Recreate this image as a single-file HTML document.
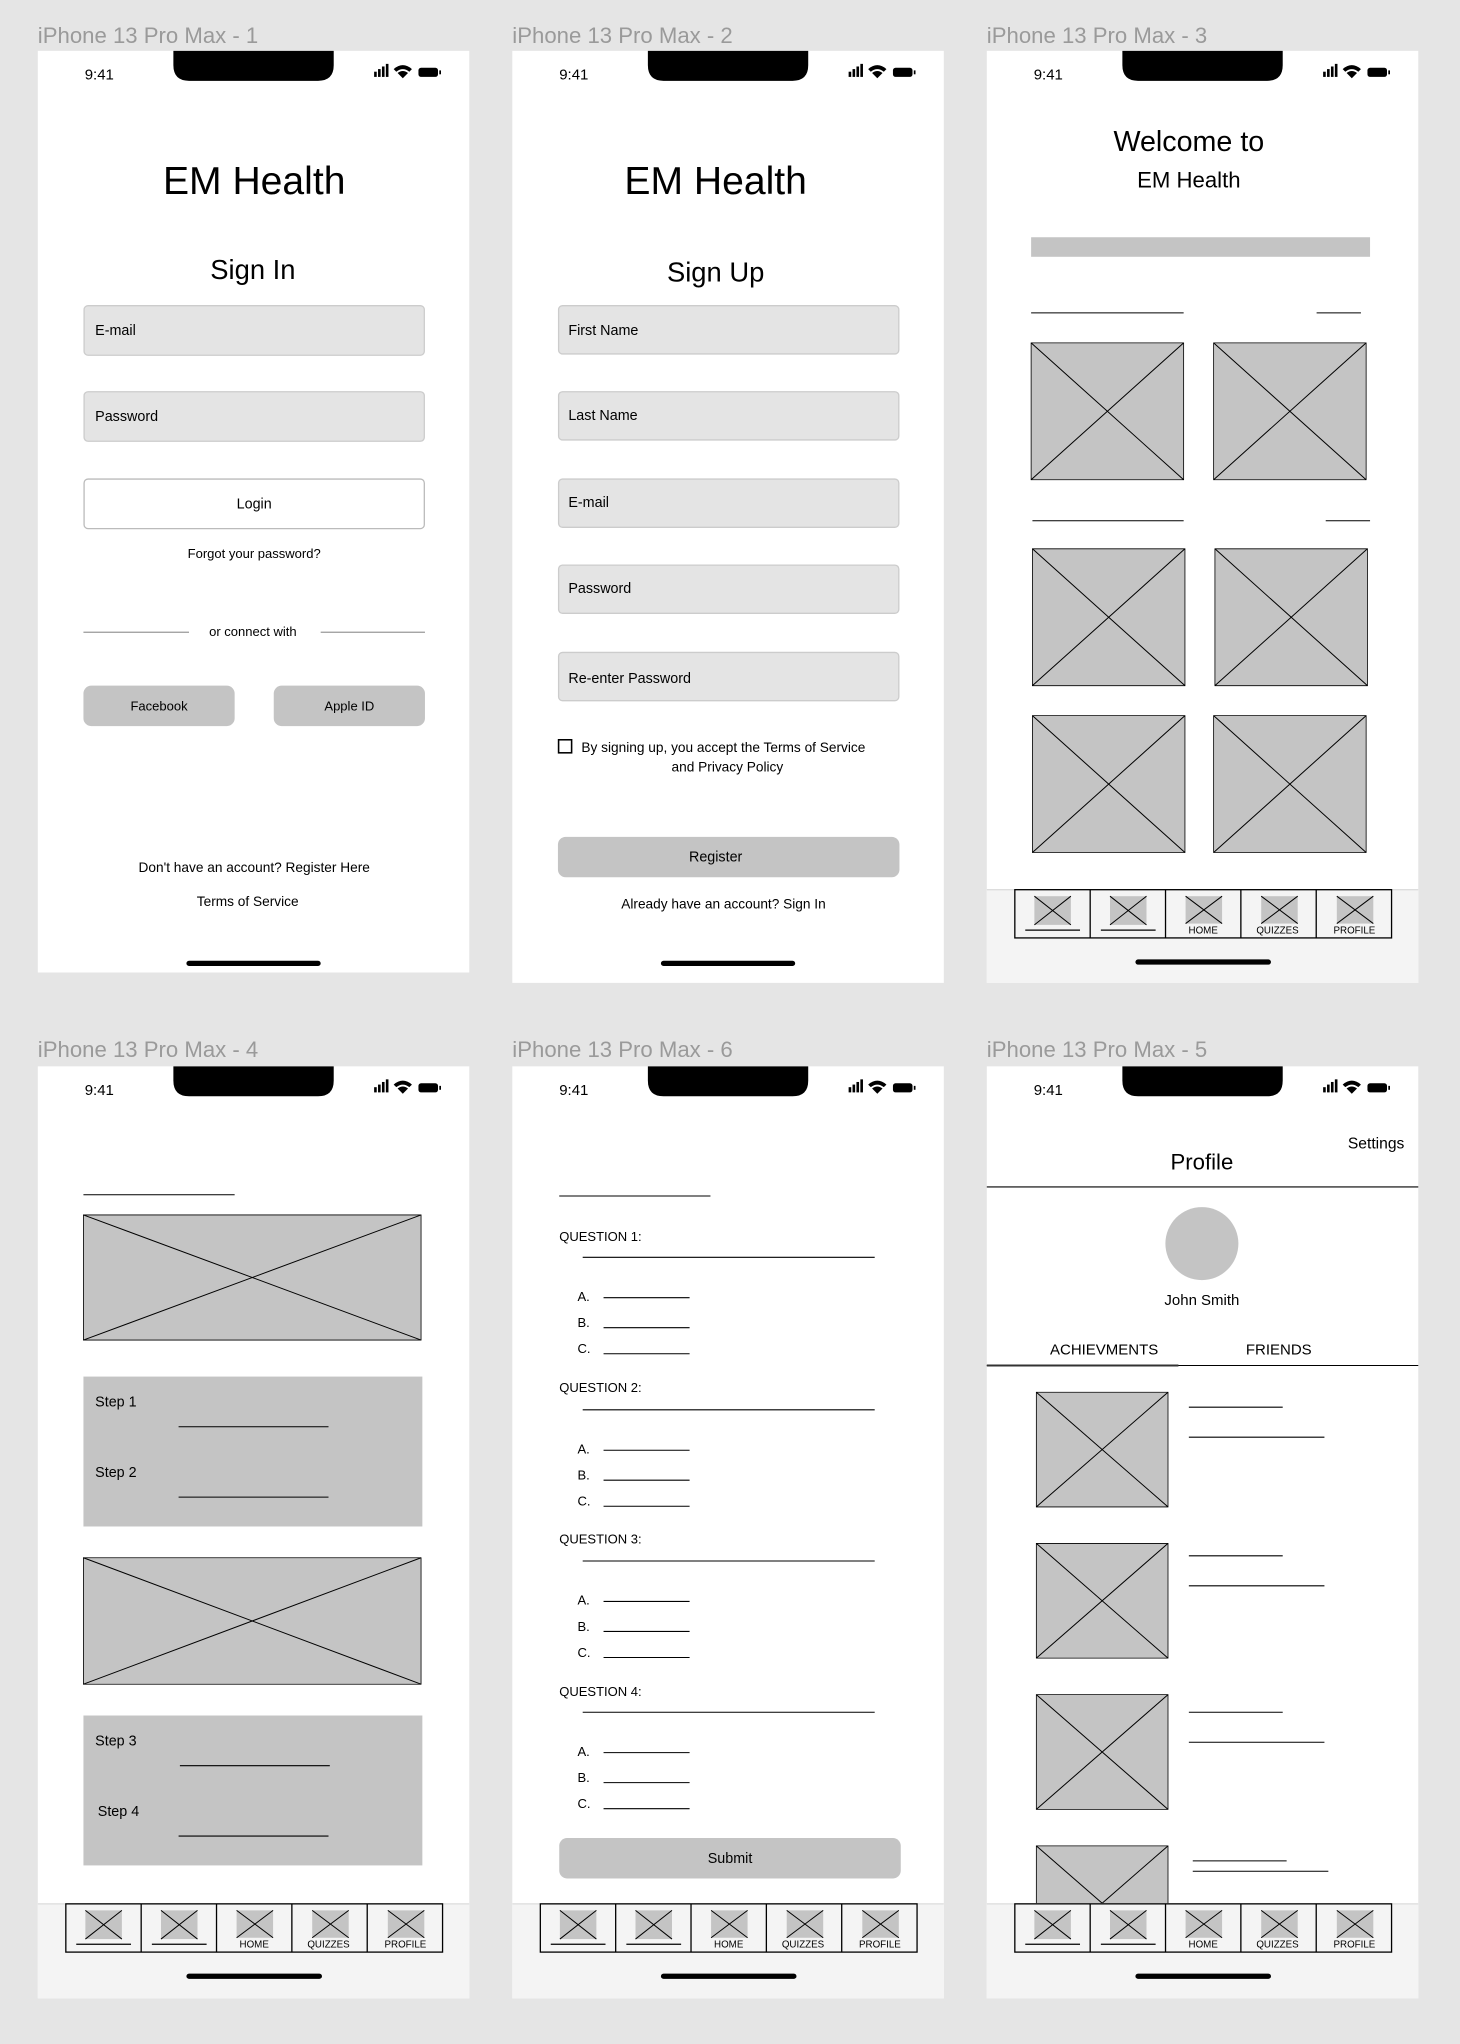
<!DOCTYPE html>
<html><head><meta charset="utf-8"><style>
html,body{margin:0;padding:0;background:#e5e5e5;width:1460px;height:2044px;overflow:hidden}
svg{display:block}
text{font-family:"Liberation Sans",sans-serif;fill:#000}
.lb{fill:#9a9a9a;font-size:17px}
</style></head><body>
<svg width="1460" height="2044" viewBox="0 0 1120 1568" preserveAspectRatio="none" xmlns="http://www.w3.org/2000/svg">
<defs>
<g id="sb">
 <path d="M104 0 H227 V11 Q227 23 215 23 H116 Q104 23 104 11 Z" fill="#000"/>
 <rect x="258" y="16" width="2" height="4" fill="#000"/><rect x="261" y="14" width="2" height="6" fill="#000"/><rect x="264" y="12" width="2" height="8" fill="#000"/><rect x="267" y="10" width="2" height="10" fill="#000"/>
 <path d="M273 14 Q280 8 287 14 L285 16 Q280 12 275 16 Z M276 17 Q280 14 284 17 L280 21 Z" fill="#000"/>
 <rect x="292" y="13" width="15" height="7" rx="2" fill="#000"/><rect x="308" y="15" width="1.3" height="3" fill="#000"/>
</g>
<g id="xi"><rect x="0" y="0" width="1" height="1" fill="#c4c4c4"/><path d="M0 0L1 1M1 0L0 1" stroke="#000" stroke-width="1" vector-effect="non-scaling-stroke"/><rect x="0" y="0" width="1" height="1" fill="none" stroke="#000" stroke-width="0.8" vector-effect="non-scaling-stroke"/></g>
<g id="ni"><rect x="0" y="0" width="1" height="1" fill="#c4c4c4"/><path d="M0 0L1 1M1 0L0 1" stroke="#000" stroke-width="1" vector-effect="non-scaling-stroke"/></g>
<g id="nav">
 <rect x="0" y="0" width="289" height="37" fill="none" stroke="#000" stroke-width="1"/>
 <path d="M57.8 0V37M115.6 0V37M173.4 0V37M231.2 0V37" stroke="#000" stroke-width="1"/>
 <use href="#ni" transform="translate(15 5) scale(28 22)"/><path d="M8 31H50" stroke="#000"/>
 <use href="#ni" transform="translate(73 5) scale(28 22)"/><path d="M66 31H108" stroke="#000"/>
 <use href="#ni" transform="translate(131 5) scale(28 21)"/>
 <use href="#ni" transform="translate(189 5) scale(28 21)"/>
 <use href="#ni" transform="translate(247 5) scale(28 21)"/>
</g>
</defs>
<rect width="1120" height="1568" fill="#e5e5e5"/>
<!-- labels -->
<text class="lb" x="29" y="33">iPhone 13 Pro Max - 1</text>
<text class="lb" x="393" y="33">iPhone 13 Pro Max - 2</text>
<text class="lb" x="757" y="33">iPhone 13 Pro Max - 3</text>
<text class="lb" x="29" y="811">iPhone 13 Pro Max - 4</text>
<text class="lb" x="393" y="811">iPhone 13 Pro Max - 6</text>
<text class="lb" x="757" y="811">iPhone 13 Pro Max - 5</text>

<!-- FRAME 1 -->
<rect x="29" y="39" width="331" height="707" fill="#fff"/>
<use href="#sb" transform="translate(29 39)"/><text x="65" y="61" font-size="11.5">9:41</text>
<text x="195" y="149" font-size="30" text-anchor="middle">EM Health</text>
<text x="194" y="214" font-size="21" text-anchor="middle">Sign In</text>
<rect x="64.5" y="234.5" width="261" height="38" rx="3" fill="#e4e4e4" stroke="#ccc"/><text x="73" y="257" font-size="11">E-mail</text>
<rect x="64.5" y="300.5" width="261" height="38" rx="3" fill="#e4e4e4" stroke="#ccc"/><text x="73" y="323" font-size="11">Password</text>
<rect x="64.5" y="367.5" width="261" height="38" rx="3" fill="#fff" stroke="#bbb"/><text x="195" y="390" font-size="11" text-anchor="middle">Login</text>
<text x="195" y="428" font-size="10" text-anchor="middle">Forgot your password?</text>
<path d="M64 485H145M246 485H326" stroke="#999"/>
<text x="194" y="488" font-size="10" text-anchor="middle">or connect with</text>
<rect x="64" y="526" width="116" height="31" rx="6" fill="#c4c4c4"/><text x="122" y="545" font-size="10" text-anchor="middle">Facebook</text>
<rect x="210" y="526" width="116" height="31" rx="6" fill="#c4c4c4"/><text x="268" y="545" font-size="10" text-anchor="middle">Apple ID</text>
<text x="195" y="669" font-size="10.5" text-anchor="middle">Don't have an account? Register Here</text>
<text x="190" y="695" font-size="10.5" text-anchor="middle">Terms of Service</text>
<rect x="143" y="737" width="103" height="4" rx="2" fill="#000"/>

<!-- FRAME 2 -->
<rect x="393" y="39" width="331" height="715" fill="#fff"/>
<use href="#sb" transform="translate(393 39)"/><text x="429" y="61" font-size="11.5">9:41</text>
<text x="549" y="149" font-size="30" text-anchor="middle">EM Health</text>
<text x="549" y="216" font-size="21" text-anchor="middle">Sign Up</text>
<rect x="428.5" y="234.5" width="261" height="37" rx="3" fill="#e4e4e4" stroke="#ccc"/><text x="436" y="257" font-size="11">First Name</text>
<rect x="428.5" y="300.5" width="261" height="37" rx="3" fill="#e4e4e4" stroke="#ccc"/><text x="436" y="322" font-size="11">Last Name</text>
<rect x="428.5" y="367.5" width="261" height="37" rx="3" fill="#e4e4e4" stroke="#ccc"/><text x="436" y="389" font-size="11">E-mail</text>
<rect x="428.5" y="433.5" width="261" height="37" rx="3" fill="#e4e4e4" stroke="#ccc"/><text x="436" y="455" font-size="11">Password</text>
<rect x="428.5" y="500.5" width="261" height="37" rx="3" fill="#e4e4e4" stroke="#ccc"/><text x="436" y="524" font-size="11">Re-enter Password</text>
<rect x="428.5" y="567.5" width="10" height="10" fill="#fff" stroke="#000" stroke-width="1.2"/>
<text x="446" y="577" font-size="10.5">By signing up, you accept the Terms of Service</text>
<text x="558" y="592" font-size="10.5" text-anchor="middle">and Privacy Policy</text>
<rect x="428" y="642" width="262" height="31" rx="6" fill="#c4c4c4"/><text x="549" y="661" font-size="11" text-anchor="middle">Register</text>
<text x="555" y="697" font-size="10.5" text-anchor="middle">Already have an account? Sign In</text>
<rect x="507" y="737" width="103" height="4" rx="2" fill="#000"/>

<!-- FRAME 3 -->
<rect x="757" y="39" width="331" height="715" fill="#fff"/>
<rect x="757" y="682" width="331" height="72" fill="#f4f4f4"/><path d="M757 682.5H1088" stroke="#ddd"/>
<use href="#sb" transform="translate(757 39)"/><text x="793" y="61" font-size="11.5">9:41</text>
<text x="912" y="116" font-size="22" text-anchor="middle">Welcome to</text>
<text x="912" y="144" font-size="17" text-anchor="middle">EM Health</text>
<rect x="791" y="182" width="260" height="15" fill="#c4c4c4"/>
<path d="M791 240H908M1010 240H1044M792 399.5H908M1017 399.5H1051" stroke="#000" stroke-width="0.8"/>
<use href="#xi" transform="translate(791 263) scale(117 105)"/>
<use href="#xi" transform="translate(931 263) scale(117 105)"/>
<use href="#xi" transform="translate(792 421) scale(117 105)"/>
<use href="#xi" transform="translate(932 421) scale(117 105)"/>
<use href="#xi" transform="translate(792 549) scale(117 105)"/>
<use href="#xi" transform="translate(931 549) scale(117 105)"/>
<use href="#nav" transform="translate(778.5 682.5)"/>
<text x="923" y="716" font-size="7.5" text-anchor="middle">HOME</text><text x="980" y="716" font-size="7.5" text-anchor="middle">QUIZZES</text><text x="1039" y="716" font-size="7.5" text-anchor="middle">PROFILE</text>
<rect x="871" y="736" width="104" height="4" rx="2" fill="#000"/>

<!-- FRAME 4 -->
<rect x="29" y="818" width="331" height="715" fill="#fff"/>
<rect x="29" y="1460" width="331" height="73" fill="#f4f4f4"/><path d="M29 1460.5H360" stroke="#ddd"/>
<use href="#sb" transform="translate(29 818)"/><text x="65" y="840" font-size="11.5">9:41</text>
<path d="M64 916.5H180" stroke="#000" stroke-width="0.8"/>
<use href="#xi" transform="translate(64 932) scale(259 96)"/>
<rect x="64" y="1056" width="260" height="115" fill="#c4c4c4"/>
<text x="73" y="1079" font-size="11">Step 1</text><text x="73" y="1133" font-size="11">Step 2</text>
<path d="M137 1094.5H252M137 1148.5H252" stroke="#000" stroke-width="0.8"/>
<use href="#xi" transform="translate(64 1195) scale(259 97)"/>
<rect x="64" y="1316" width="260" height="115" fill="#c4c4c4"/>
<text x="73" y="1339" font-size="11">Step 3</text><text x="75" y="1393" font-size="11">Step 4</text>
<path d="M138 1354.5H253M137 1408.5H252" stroke="#000" stroke-width="0.8"/>
<use href="#nav" transform="translate(50.5 1460.5)"/>
<text x="195" y="1494" font-size="7.5" text-anchor="middle">HOME</text><text x="252" y="1494" font-size="7.5" text-anchor="middle">QUIZZES</text><text x="311" y="1494" font-size="7.5" text-anchor="middle">PROFILE</text>
<rect x="143" y="1514" width="104" height="4" rx="2" fill="#000"/>

<!-- FRAME 6 -->
<rect x="393" y="818" width="331" height="715" fill="#fff"/>
<rect x="393" y="1460" width="331" height="73" fill="#f4f4f4"/><path d="M393 1460.5H724" stroke="#ddd"/>
<use href="#sb" transform="translate(393 818)"/><text x="429" y="840" font-size="11.5">9:41</text>
<path d="M429 917.5H545" stroke="#000" stroke-width="0.8"/>
<g font-size="10">
<text x="429" y="952">QUESTION 1:</text>
<text x="443" y="998">A.</text><text x="443" y="1018">B.</text><text x="443" y="1038">C.</text>
<text x="429" y="1068">QUESTION 2:</text>
<text x="443" y="1115">A.</text><text x="443" y="1135">B.</text><text x="443" y="1155">C.</text>
<text x="429" y="1184">QUESTION 3:</text>
<text x="443" y="1231">A.</text><text x="443" y="1251">B.</text><text x="443" y="1271">C.</text>
<text x="429" y="1301">QUESTION 4:</text>
<text x="443" y="1347">A.</text><text x="443" y="1367">B.</text><text x="443" y="1387">C.</text>
</g>
<path d="M447 964.5H671M463 995.5H529M463 1018.5H529M463 1038.5H529
M447 1081.5H671M463 1112.5H529M463 1135.5H529M463 1155.5H529
M447 1197.5H671M463 1228.5H529M463 1251.5H529M463 1271.5H529
M447 1313.5H671M463 1344.5H529M463 1367.5H529M463 1387.5H529" stroke="#000" stroke-width="0.8"/>
<rect x="429" y="1410" width="262" height="31" rx="6" fill="#c4c4c4"/><text x="560" y="1429" font-size="11" text-anchor="middle">Submit</text>
<use href="#nav" transform="translate(414.5 1460.5)"/>
<text x="559" y="1494" font-size="7.5" text-anchor="middle">HOME</text><text x="616" y="1494" font-size="7.5" text-anchor="middle">QUIZZES</text><text x="675" y="1494" font-size="7.5" text-anchor="middle">PROFILE</text>
<rect x="507" y="1514" width="104" height="4" rx="2" fill="#000"/>

<!-- FRAME 5 -->
<rect x="757" y="818" width="331" height="715" fill="#fff"/>
<rect x="757" y="1460" width="331" height="73" fill="#f4f4f4"/>
<use href="#sb" transform="translate(757 818)"/><text x="793" y="840" font-size="11.5">9:41</text>
<text x="1034" y="881" font-size="12">Settings</text>
<text x="922" y="897" font-size="17" text-anchor="middle">Profile</text>
<path d="M757 910.5H1088" stroke="#000" stroke-width="0.9"/>
<circle cx="922" cy="954" r="28" fill="#c4c4c4"/>
<text x="922" y="1001" font-size="11.5" text-anchor="middle">John Smith</text>
<text x="847" y="1039" font-size="11.5" text-anchor="middle">ACHIEVMENTS</text>
<text x="981" y="1039" font-size="11.5" text-anchor="middle">FRIENDS</text>
<path d="M757 1047.5H1088" stroke="#000" stroke-width="0.8"/><path d="M757 1047.5H904" stroke="#333" stroke-width="1.6"/>
<use href="#xi" transform="translate(795 1068) scale(101 88)"/>
<use href="#xi" transform="translate(795 1184) scale(101 88)"/>
<use href="#xi" transform="translate(795 1300) scale(101 88)"/>
<use href="#xi" transform="translate(795 1416) scale(101 88)"/>
<path d="M912 1079.5H984M912 1102.5H1016M912 1193.5H984M912 1216.5H1016M912 1313.5H984M912 1336.5H1016M915 1427.5H987M915 1435.5H1019" stroke="#000" stroke-width="0.8"/>
<rect x="757" y="1460" width="331" height="73" fill="#f4f4f4"/><path d="M757 1460.5H1088" stroke="#ddd"/>
<use href="#nav" transform="translate(778.5 1460.5)"/>
<text x="923" y="1494" font-size="7.5" text-anchor="middle">HOME</text><text x="980" y="1494" font-size="7.5" text-anchor="middle">QUIZZES</text><text x="1039" y="1494" font-size="7.5" text-anchor="middle">PROFILE</text>
<rect x="871" y="1514" width="104" height="4" rx="2" fill="#000"/>
</svg>
</body></html>
